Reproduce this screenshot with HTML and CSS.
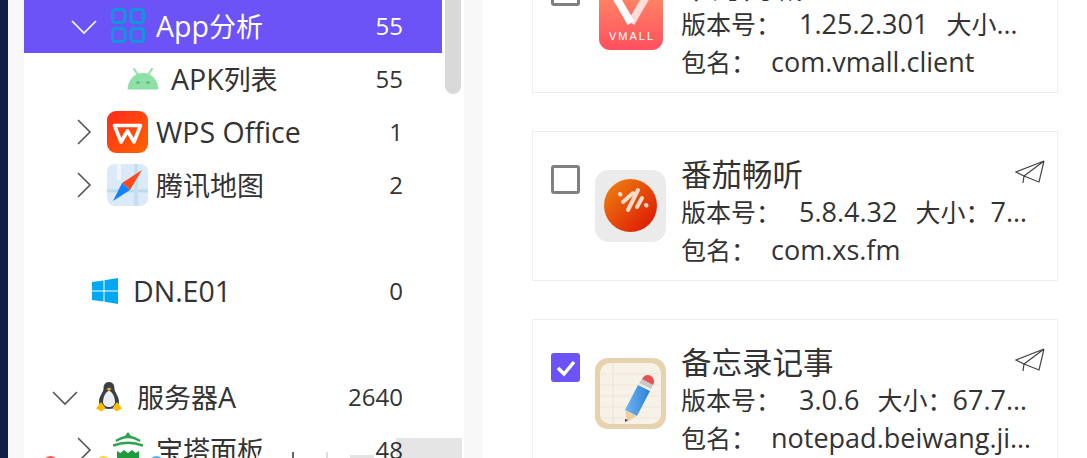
FILE: index.html
```html
<!DOCTYPE html>
<html lang="en">
<head>
    <meta charset="UTF-8">
    <meta name="viewport" content="width=device-width, initial-scale=1.0">
    <title>App分析</title>
    <link rel="stylesheet" href="styles.css">
</head>
<body>
    <div class="edge"></div>

    <div class="side">
        <div class="panel">
            <div class="tree">
                <div class="row depth-2 selected">
                    <svg class="chev" viewBox="0 0 26 26"><path d="M1 8l12 12L25 8"/></svg>
                    <span class="icon">
                        <svg width="34" height="35" viewBox="0 0 34 35" fill="none" stroke="#1296db" stroke-width="3">
                            <rect x="1.500" y="1.500" width="12.500" height="13" rx="3"/>
                            <rect x="20" y="1.500" width="12.500" height="13" rx="3"/>
                            <rect x="1.500" y="20.500" width="12.500" height="13" rx="3"/>
                            <rect x="20" y="20.500" width="12.500" height="13" rx="3"/>
                        </svg>
                    </span>
                    <span class="label"><span class="en">App</span>分析</span>
                    <span class="count">55</span>
                </div>
                <div class="row depth-3">
                    <span class="chev-space"></span>
                    <span class="icon">
                        <svg width="32" height="22" viewBox="0 0 32 22">
                            <path d="M7 1l3.500 5M25 1l-3.500 5" stroke="#8ee0a4" stroke-width="2" stroke-linecap="round"/>
                            <path d="M0.500 21.500C1 11 8 5 16 5s15 6 15.500 16.500z" fill="#8ee0a4"/>
                            <circle cx="11" cy="14.500" r="1.600" fill="#5cb58c"/>
                            <circle cx="21" cy="14.500" r="1.600" fill="#5cb58c"/>
                        </svg>
                    </span>
                    <span class="label"><span class="en">APK</span>列表</span>
                    <span class="count">55</span>
                </div>
                <div class="row depth-2">
                    <svg class="chev" viewBox="0 0 26 26"><path d="M7 1l12 12L7 25"/></svg>
                    <span class="icon">
                        <svg width="41" height="42" viewBox="0 0 41 42">
                            <defs>
                                <linearGradient id="wps" x1="0" y1="0" x2="1" y2="1">
                                    <stop offset="0" stop-color="#ff2a1c"/>
                                    <stop offset="1" stop-color="#ff6500"/>
                                </linearGradient>
                            </defs>
                            <rect width="41" height="42" rx="9" fill="url(#wps)"/>
                            <path d="M7.500 14.500H33.500L27 31 20.500 20 14 31z" fill="none" stroke="#fff" stroke-width="3.600" stroke-linejoin="round"/>
                        </svg>
                    </span>
                    <span class="label en">WPS Office</span>
                    <span class="count">1</span>
                </div>
                <div class="row depth-2">
                    <svg class="chev" viewBox="0 0 26 26"><path d="M7 1l12 12L7 25"/></svg>
                    <span class="icon">
                        <svg width="41" height="42" viewBox="0 0 41 42">
                            <rect width="41" height="42" rx="8" fill="#dbeaf8"/>
                            <path d="M0 27h41" stroke="#bcdcee" stroke-width="3"/>
                            <path d="M29 0v42" stroke="#c3dff0" stroke-width="4"/>
                            <path d="M12 0v16" stroke="#eef5fb" stroke-width="4"/>
                            <path d="M35 6L15 19l8 7z" fill="#fb4a1f"/>
                            <path d="M6 37l9-18 8 7z" fill="#1482fa"/>
                        </svg>
                    </span>
                    <span class="label">腾讯地图</span>
                    <span class="count">2</span>
                </div>

                <div class="row"></div>

                <div class="row depth-0">
                    <span class="chev-space"></span>
                    <span class="icon">
                        <svg width="26" height="26" viewBox="0 0 26 26" fill="#00a8f3">
                            <path d="M0 4l11.500-1.600v10H0z"/>
                            <path d="M12.500 2.200L26 0v12.400H12.500z"/>
                            <path d="M0 13.600h11.500v10L0 22z"/>
                            <path d="M12.500 13.600H26V26l-13.500-2.200z"/>
                        </svg>
                    </span>
                    <span class="label en">DN.E01</span>
                    <span class="count">0</span>
                </div>

                <div class="row"></div>

                <div class="row depth-1">
                    <svg class="chev" viewBox="0 0 26 26"><path d="M1 8l12 12L25 8"/></svg>
                    <span class="icon">
                        <svg width="26" height="30" viewBox="0 0 26 30">
                            <path d="M13 0c-4 0-5.500 3-5.500 7 0 3-4.500 7-4.500 13 0 4 4 7 10 7s10-3 10-7c0-6-4.500-10-4.500-13 0-4-1.500-7-5.500-7z" fill="#3a3f47"/>
                            <path d="M13 9c-3 0-6 6-6 11 0 3 3 5 6 5s6-2 6-5c0-5-3-11-6-11z" fill="#eceff3"/>
                            <path d="M10.500 7l2.500-1.500L15.500 7 13 9z" fill="#f5b70a"/>
                            <path d="M5 20L0 26.500 5.500 29.500 9.500 26z" fill="#fbbc05"/>
                            <path d="M21 20l5 6.500-5.500 3L16.500 26z" fill="#fbbc05"/>
                        </svg>
                    </span>
                    <span class="label">服务器<span class="en">A</span></span>
                    <span class="count">2640</span>
                </div>
                <div class="row depth-2">
                    <svg class="chev" viewBox="0 0 26 26"><path d="M7 1l12 12L7 25"/></svg>
                    <span class="icon">
                        <svg width="30" height="36" viewBox="0 0 30 36">
                            <path d="M15 0l3 4h-6z" fill="#2aa44a"/>
                            <path d="M3 9Q15 1 27 9" fill="none" stroke="#2aa44a" stroke-width="2.500"/>
                            <path d="M0 13.500Q15 8 30 13.500" fill="none" stroke="#2aa44a" stroke-width="2.500"/>
                            <path d="M4 36V19l3.500 2 3.500-3 4 3 4-3 3.500 3 3.500-2v17z" fill="#1f9a3c"/>
                        </svg>
                    </span>
                    <span class="label">宝塔面板</span>
                    <span class="count">48</span>
                </div>
            </div>
            <div class="scroll-thumb"></div>
        </div>
    </div>

    <div class="cards">
        <div class="card">
            <span class="check"></span>
            <span class="app-icon vmall">
                <svg width="64" height="64" viewBox="0 0 64 64">
                    <defs>
                        <linearGradient id="vm" x1="0" y1="0" x2="0" y2="1">
                            <stop offset="0" stop-color="#ff8f66"/>
                            <stop offset="1" stop-color="#ff4f5e"/>
                        </linearGradient>
                    </defs>
                    <rect width="64" height="64" rx="11" fill="url(#vm)"/>
                    <path d="M14 6L32 37" fill="none" stroke="#fff" stroke-width="7.500"/>
                    <path d="M32 37L50 6" fill="none" stroke="#fff" stroke-width="7.500" opacity=".75"/>
                    <text class="vmall-text" x="32" y="54" text-anchor="middle" textLength="44">VMALL</text>
                </svg>
            </span>
            <div class="info">
                <div class="title-row">
                    <span class="app-name">华为商城</span>
                    <svg class="send" viewBox="0 0 30 24"><path d="M29 1L1 12l8 4zM29 1L9 16l-1 7M29 1l-5 21-15-6"/></svg>
                </div>
                <div class="line"><span class="key">版本号：</span><span class="val">1.25.2.301</span><span class="key-size">大小：</span>56.3MB</div>
                <div class="line"><span class="key pkg-key">包名：</span>com.vmall.client</div>
            </div>
        </div>

        <div class="card">
            <span class="check"></span>
            <span class="app-icon">
                <svg width="71" height="72" viewBox="0 0 71 72">
                    <defs>
                        <linearGradient id="fq" x1="0" y1="0" x2="1" y2="1">
                            <stop offset="0" stop-color="#f0860f"/>
                            <stop offset="1" stop-color="#dc0f05"/>
                        </linearGradient>
                    </defs>
                    <rect width="71" height="72" rx="14" fill="#ebebeb"/>
                    <circle cx="35.500" cy="35.500" r="26.500" fill="url(#fq)"/>
                    <path d="M25 24l.5 .5M38 23L28 32M43 20L33 40M47 28L42 37M51 35l.5 .5" fill="none" stroke="#f9dcc8" stroke-width="4" stroke-linecap="round"/>
                </svg>
            </span>
            <div class="info">
                <div class="title-row">
                    <span class="app-name">番茄畅听</span>
                    <svg class="send" viewBox="0 0 30 24"><path d="M29 1L1 12l8 4zM29 1L9 16l-1 7M29 1l-5 21-15-6"/></svg>
                </div>
                <div class="line"><span class="key">版本号：</span><span class="val">5.8.4.32</span><span class="key-size">大小：</span>72.5MB</div>
                <div class="line"><span class="key pkg-key">包名：</span>com.xs.fm</div>
            </div>
        </div>

        <div class="card">
            <span class="check checked">
                <svg width="22" height="18" viewBox="0 0 22 18"><path d="M3 9l6 6L19 3" fill="none" stroke="#fff" stroke-width="3.500"/></svg>
            </span>
            <span class="app-icon">
                <svg width="71" height="71" viewBox="0 0 71 71">
                    <defs>
                        <linearGradient id="pen" x1="0" y1="0" x2="1" y2="0">
                            <stop offset="0" stop-color="#6bb6f0"/>
                            <stop offset="1" stop-color="#2f80d8"/>
                        </linearGradient>
                    </defs>
                    <rect width="71" height="71" rx="13" fill="#e7d2ae"/>
                    <rect x="5" y="5" width="61" height="61" rx="10" fill="#f6f2e8"/>
                    <path d="M5 16h61M5 27h61M5 38h61M5 49h61M5 60h61" stroke="#efe7d6"/>
                    <path d="M18 5v61" stroke="#ece3d0"/>
                    <path d="M43 27l12 6-13 25-12-6z" fill="url(#pen)"/>
                    <path d="M30 52l12 6-10 6z" fill="#edcfa0"/>
                    <path d="M30 61l3 1-3 2z" fill="#333"/>
                    <path d="M44 25l12 6 2-4-11-6z" fill="#c8c8c8"/>
                    <path d="M47 21c2-4 6-5 9-3s4 6 2 9z" fill="#e8514f"/>
                </svg>
            </span>
            <div class="info">
                <div class="title-row">
                    <span class="app-name">备忘录记事</span>
                    <svg class="send" viewBox="0 0 30 24"><path d="M29 1L1 12l8 4zM29 1L9 16l-1 7M29 1l-5 21-15-6"/></svg>
                </div>
                <div class="line"><span class="key">版本号：</span><span class="val">3.0.6</span><span class="key-size">大小：</span>67.7MB</div>
                <div class="line"><span class="key pkg-key">包名：</span>notepad.beiwang.jishiben.app</div>
            </div>
        </div>
    </div>

    <!-- bottom window bar, only its top shows -->
    <div class="hover-box"></div>
    <div class="dock">
        <span class="dot red"></span>
        <span class="dot yellow"></span>
        <span class="dot blue"></span>
        <span class="sep first"></span>
        <span class="sep dark"></span>
        <span class="sep"></span>
        <span class="dock-mark"></span>
    </div>
</body>
</html>
```

FILE: styles.css
```css
* {
    box-sizing: border-box;
    margin: 0;
    padding: 0;
}

body {
    position: relative;
    display: flex;
    height: 458px;
    overflow: hidden;
    background-color: #fff;
    color: #333;
    font-family: "Open Sans", "Noto Sans CJK SC", sans-serif;
}

.edge {
    width: 8px;
    flex-shrink: 0;
    background-color: #0f1f45;
}

.side {
    flex-shrink: 0;
    width: 475px;
    padding: 0 19px 0 16px;
    background-color: #f8f8f8;
}

.panel {
    display: flex;
    gap: 3px;
    height: 100%;
    background-color: #fff;
}

.tree {
    width: 418px;
    flex-shrink: 0;
}

.scroll-thumb {
    width: 16px;
    height: 94px;
    background-color: #d9d9d9;
    border-radius: 0 0 8px 8px;
}

.row {
    display: flex;
    align-items: center;
    height: 53px;
    padding-right: 39px;
    padding-bottom: 2px;
    font-size: 27px;
}

.row.selected {
    background-color: #6b53f7;
    color: #fff;
}

.row.selected .chev path {
    stroke: #fff;
}

.depth-0 { padding-left: 24px; }
.depth-1 { padding-left: 28px; }
.depth-2 { padding-left: 47px; }
.depth-3 { padding-left: 62px; }

.chev,
.chev-space {
    width: 26px;
    height: 26px;
    flex-shrink: 0;
}

.chev path {
    fill: none;
    stroke: #555;
    stroke-width: 1.6;
}

.icon {
    display: flex;
    justify-content: center;
    width: 41px;
    margin-left: 10px;
    margin-right: 8px;
    flex-shrink: 0;
}

.label {
    flex: 1;
    white-space: nowrap;
}

.en {
    font-size: 28.5px;
}

.count {
    font-size: 24px;
}

.cards {
    display: flex;
    flex-direction: column;
    gap: 38px;
    width: 526px;
    margin-top: -57px;
    margin-left: 49px;
    flex-shrink: 0;
}

.card {
    display: flex;
    align-items: flex-start;
    height: 150px;
    flex-shrink: 0;
    padding: 22px 12px 0 18px;
    border: 1px solid #eee;
}

.check {
    display: flex;
    align-items: center;
    justify-content: center;
    width: 29px;
    height: 29px;
    margin-top: 11px;
    flex-shrink: 0;
    border: 3px solid #808080;
    border-radius: 3px;
}

.check.checked {
    border: none;
    background-color: #6b53f7;
}

.app-icon {
    display: block;
    height: 72px;
    margin-top: 16px;
    margin-left: 15px;
    flex-shrink: 0;
}

.app-icon.vmall {
    margin-top: 20px;
    margin-left: 19px;
    margin-right: 3px;
    height: 64px;
}

.vmall-text {
    fill: #fff;
    font-size: 11px;
    font-family: "Liberation Sans", sans-serif;
}

.info {
    flex: 1;
    min-width: 0;
    margin-left: 15px;
}

.title-row {
    display: flex;
    align-items: flex-start;
    justify-content: space-between;
    height: 39px;
}

.app-name {
    font-size: 30.5px;
    line-height: 40px;
}

.send {
    width: 30px;
    height: 24px;
    margin-top: 6px;
}

.send path {
    fill: none;
    stroke: #444;
    stroke-width: 1.2;
}

.line {
    width: 361px;
    height: 38px;
    font-size: 27px;
    line-height: 38px;
    white-space: nowrap;
    overflow: hidden;
    text-overflow: ellipsis;
}

.key,
.key-size {
    font-size: 25px;
}

.key {
    margin-right: 18px;
}

.key.pkg-key {
    margin-right: 15px;
}

.val {
    margin-right: 18px;
}

.hover-box {
    position: absolute;
    left: 396px;
    top: 438px;
    width: 66px;
    height: 20px;
    background-color: rgba(0, 0, 0, 0.1);
}

.dock {
    position: absolute;
    left: 43px;
    top: 452px;
    display: flex;
    width: 335px;
    height: 6px;
    overflow: hidden;
}

.dot {
    width: 15px;
    height: 15px;
    margin-top: 4px;
    margin-right: 38px;
    border-radius: 50%;
    flex-shrink: 0;
}

.dot.red { background-color: #f25f5c; }
.dot.yellow { background-color: #fbd34d; }
.dot.blue { background-color: #54b4f0; }

.sep {
    width: 2px;
    height: 6px;
    flex-shrink: 0;
    background-color: #ddd;
}

.sep.first {
    margin-left: 54px;
}

.sep.dark {
    margin-left: 34px;
    margin-right: 32px;
    background-color: #666;
}

.dock-mark {
    width: 24px;
    height: 3px;
    margin-top: 3px;
    margin-left: 22px;
    flex-shrink: 0;
    background-color: #e4e4e4;
}
```
